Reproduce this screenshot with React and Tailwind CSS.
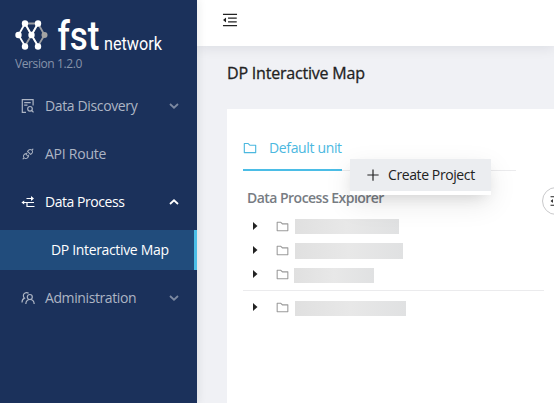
import React from "react";
import { AiOutlineApi, AiOutlineFolder, AiOutlineMenuFold, AiOutlinePlus } from "react-icons/ai";

function Logo() {
  return (
    <svg width="160" height="34" viewBox="0 0 160 34" className="shrink-0 overflow-visible">
      <g fill="none" strokeWidth="1.8">
        <path d="M11 4.500h13L30.500 16 24 27 17.500 16M24 4.500 17.500 16 11 27M11 4.500 17.500 16" stroke="#9c9ea3" />
        <path d="M11 4.500 4.500 16 11 27M11 4.500 17.500 16 24 27M17.500 16 24 4.500" stroke="#fff" />
      </g>
      <circle cx="30.500" cy="16" r="3" fill="#a3a3a3" />
      <g fill="#fff">
        <circle cx="11" cy="4.500" r="3.200" />
        <circle cx="24" cy="4.500" r="3.200" />
        <circle cx="4.500" cy="16" r="3.200" />
        <circle cx="17.500" cy="16" r="3.200" />
        <circle cx="11" cy="27.500" r="3.200" />
        <circle cx="24" cy="27.500" r="3.200" />
      </g>
      <g fill="#fff" className="font-['Roboto',sans-serif]">
        <text x="43.500" y="31" fontSize="40" fontWeight="500" textLength="42" lengthAdjust="spacingAndGlyphs">fst</text>
        <text x="90" y="31" fontSize="18" textLength="58" lengthAdjust="spacingAndGlyphs">network</text>
      </g>
    </svg>
  );
}

function DiscoveryIcon() {
  return (
    <svg width="14" height="14" viewBox="0 0 14 14" fill="none" stroke="currentColor" strokeWidth="1.200">
      <path d="M5 13.300H1.300V.700h10.800V6.500M3.200 3.700h6.500M3.200 6.200h3.300" />
      <circle cx="9" cy="9.800" r="2.300" />
      <path d="m10.700 11.500 1.800 1.900" />
    </svg>
  );
}

function ProcessIcon() {
  return (
    <svg width="14" height="14" viewBox="0 0 14 14" fill="none" stroke="currentColor" strokeWidth="1.2">
      <path d="M5.500 3.500H12M1.500 7.500H13M6 7.500v4h7.500" />
      <path d="M10 1 13 3.500 10 6zM3.200 5.500.400 7.500l2.800 2z" fill="currentColor" stroke="none" />
    </svg>
  );
}

function PeopleIcon() {
  return (
    <svg width="14" height="14" viewBox="0 0 14 14" fill="none" stroke="currentColor" strokeWidth="1.200">
      <path d="M1 11.500c0-2.200.8-3.700 2.500-4.400A3 3 0 1 1 7.600 2.300" />
      <circle cx="8.800" cy="6" r="2.500" />
      <path d="M4.800 13c.2-2.800 1.800-4.500 4.200-4.500s4 1.700 4.200 4.500" />
    </svg>
  );
}

function Chevron({ up = false }) {
  return (
    <svg width="10" height="6" viewBox="0 0 10 6" fill="none" stroke="currentColor" strokeWidth="1.800">
      <path d={up ? "M1 5 5 1.300 9 5" : "M1 1 5 4.700 9 1"} />
    </svg>
  );
}

function NavItem({ icon, label, labelClass, chevron, active = false }) {
  return (
    <div className={`flex h-10 items-center pr-[18px] pl-[21px] ${active ? "text-white" : "text-[#adb5c4]"}`}>
      <span className="flex w-6 shrink-0 items-center text-sm">{icon}</span>
      <span className={`whitespace-nowrap text-sm ${labelClass}`}>{label}</span>
      {chevron && <span className={`ml-auto pb-px ${active ? "" : "text-[#7c89a1]"}`}>{chevron}</span>}
    </div>
  );
}

function TreeRow({ bar }) {
  return (
    <div className="flex h-6 items-center pl-[10px]">
      <svg width="5" height="8" viewBox="0 0 5 8" className="mr-[17px] mb-[2px] shrink-0">
        <path d="M0 0 4.500 4 0 8z" fill="#222" />
      </svg>
      <AiOutlineFolder className="mb-[2px] size-[15px] shrink-0 text-[#9a9a9a]" />
      <span className={`bg-linear-to-r from-[#e0e0e0] via-[#e8e8e8] to-[#e0e1e2] ${bar}`} />
    </div>
  );
}

export default function App() {
  return (
    <div className="flex h-[403px] w-[554px] overflow-hidden bg-[#f0f1f5] font-['Open_Sans','Noto_Sans',sans-serif]">
      <aside className="z-10 w-[197px] shrink-0 bg-[#1b315b] shadow-[2px_0_8px_rgba(29,35,41,0.08)]">
        <div className="h-[86px] pt-[19px] pl-[14px]">
          <Logo />
          <div className="pt-[2px] pl-px text-xs leading-[18px] tracking-[-0.400px] text-[#8793aa]">Version 1.2.0</div>
        </div>
        <nav className="flex flex-col gap-2">
          <NavItem icon={<DiscoveryIcon />} label="Data Discovery" labelClass="tracking-[-0.360px]" chevron={<Chevron />} />
          <NavItem icon={<AiOutlineApi />} label="API Route" labelClass="tracking-[-0.250px]" />
          <NavItem icon={<ProcessIcon />} label="Data Process" labelClass="tracking-[-0.450px]" chevron={<Chevron up />} active />
          <div className="flex h-10 items-center border-r-[3px] border-[#4bbde6] bg-[#214c7c] pl-[51px] text-sm whitespace-nowrap tracking-[-0.340px] text-white">
            DP Interactive Map
          </div>
          <NavItem icon={<PeopleIcon />} label="Administration" labelClass="tracking-[-0.400px]" chevron={<Chevron />} />
        </nav>
      </aside>

      <div className="flex min-w-0 flex-1 flex-col">
        <header className="flex h-[46px] shrink-0 items-center bg-white pb-[6px] pl-[24px] shadow-[0_2px_12px_rgba(0,21,41,0.09)]">
          <AiOutlineMenuFold className="size-[18px] text-[#222]" />
        </header>
        <h1 className="h-[63px] pt-[15px] pl-[30px] text-base leading-6 tracking-[-0.200px] whitespace-nowrap text-[#222] [-webkit-text-stroke:0.3px_#222]">
          DP Interactive Map
        </h1>
        <main className="relative ml-[30px] flex-1 bg-white pl-4">
          <div className="mr-[38px] flex h-[62px] border-b border-[#ebebed] pt-[16px]">
            <div className="flex h-[46px] w-[99px] shrink-0 items-start border-b-2 border-[#4bbde6] pt-[15px] text-[#4bb8df]">
              <AiOutlineFolder className="-ml-px size-4 shrink-0" />
              <span className="pl-[11px] text-sm leading-4 tracking-[-0.350px] whitespace-nowrap">Default unit</span>
            </div>
          </div>
          <h2 className="h-[44px] pt-[17px] pl-1 text-sm leading-5 font-semibold tracking-[-0.530px] whitespace-nowrap text-[#777c83]">
            Data Process Explorer
          </h2>
          <div className="mr-[10px] flex h-[76px] flex-col border-b border-[#ebebed]">
            <TreeRow bar="ml-[5px] mb-px h-[15px] w-[104px]" />
            <TreeRow bar="ml-[5px] h-[16px] w-[108px]" />
            <TreeRow bar="ml-[4px] mt-px h-[15px] w-[80px]" />
          </div>
          <div className="pt-[5px]">
            <TreeRow bar="ml-[5px] mt-px h-[15px] w-[111px]" />
          </div>

          <div className="absolute top-[78px] left-[315px] flex size-7 items-center rounded-full border border-[#c9c9cb] bg-white pl-[6px]">
            <AiOutlineMenuFold className="size-[14px] text-[#222]" />
          </div>

          <div className="absolute top-[50px] left-[123px] w-[141px] bg-white pb-1 shadow-[0_9px_28px_rgba(0,0,0,0.09),0_6px_16px_-6px_rgba(0,0,0,0.14)]">
            <div className="flex h-8 items-center bg-[#ebedf0] pl-[15px] text-sm whitespace-nowrap text-[#222]">
              <AiOutlinePlus className="size-4 shrink-0" />
              <span className="pl-[7px] tracking-[-0.400px]">Create Project</span>
            </div>
          </div>
        </main>
      </div>
    </div>
  );
}
